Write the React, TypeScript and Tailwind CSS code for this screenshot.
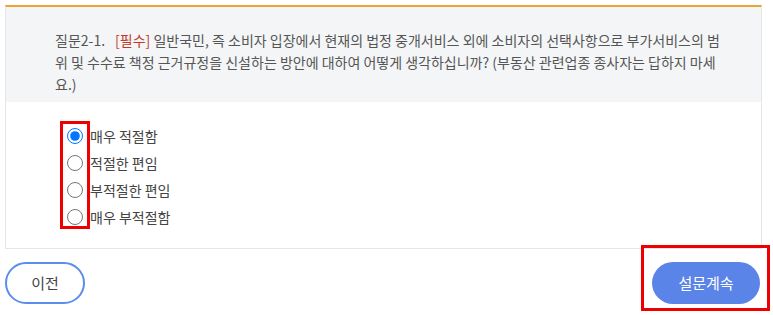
import { useState } from "react";

const options = ["매우 적절함", "적절한 편임", "부적절한 편임", "매우 부적절함"];

export default function App() {
  const [picked, setPicked] = useState(0);

  return (
    <div
      className="w-[773px] h-[315px] bg-white pt-[5px] px-[5px] overflow-hidden"
      style={{ fontFamily: '"Noto Sans CJK KR", "Noto Sans", sans-serif' }}
    >
      {/* question card */}
      <div className="w-[757px] border-t-2 border-[#e9a431] border-x border-b border-x-[#e6e6e6] border-b-[#e6e6e6]">
        <div className="bg-[#f4f5f7] pt-[22px] pb-[7px] pl-[49px] pr-[35px] text-[14px] leading-[22px] text-[#555]">
          <span className="mr-[10px]">질문2-1.</span>
          <span className="text-[#c0392b]">[필수]</span> 일반국민, 즉 소비자 입장에서 현재의 법정 중개서비스 외에 소비자의
          선택사항으로 부가서비스의 범위 및 수수료 책정 근거규정을 신설하는 방안에 대하여 어떻게 생각하십니까? (부동산 관련업종 종사자는 답하지 마세요.)
        </div>
        <div className="pt-[19px] pb-[19px] pl-[54px]">
          <div className="flex">
            <div className="flex flex-col border-[3px] border-[#ee0000] px-[4px] pt-[4px] pb-[1px] gap-[11px]">
              {options.map((o, i) => (
                <input
                  key={o}
                  type="radio"
                  name="q"
                  checked={picked === i}
                  onChange={() => setPicked(i)}
                  className="m-0 w-[16px] h-[16px]"
                />
              ))}
            </div>
            <div className="flex flex-col pt-[5px] gap-[7px] text-[14px] leading-[20px] text-[#444]">
              {options.map((o) => (
                <span key={o}>{o}</span>
              ))}
            </div>
          </div>
        </div>
      </div>

      {/* navigation */}
      <div className="flex items-center justify-between mt-[13px] pr-[8px]">
        <button className="w-[80px] h-[42px] rounded-full border-2 border-[#5b8def] text-[15px] text-[#444] bg-white">
          이전
        </button>
        <div className="relative">
          <button className="w-[108px] h-[42px] rounded-full bg-[#5a84e8] text-[15px] text-white">
            설문계속
          </button>
          <div className="absolute -left-[11px] -top-[17px] -right-[10px] -bottom-[7px] border-[3px] border-[#ee0000] pointer-events-none" />
        </div>
      </div>
    </div>
  );
}
